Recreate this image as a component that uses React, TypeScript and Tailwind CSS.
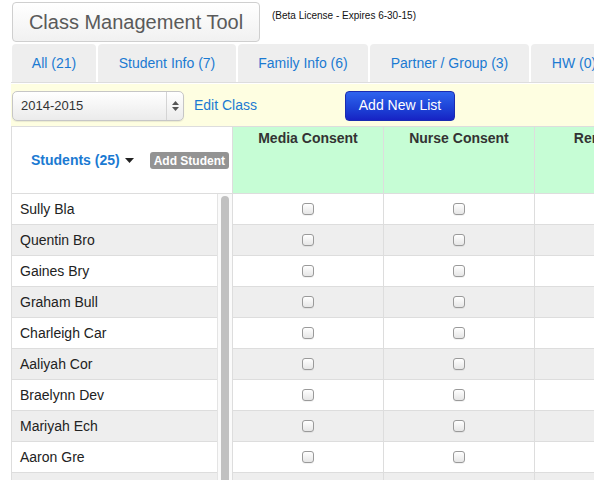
import React from 'react'

const TABS: { label: string; width: string }[] = [
  { label: 'All (21)', width: 'w-[84px]' },
  { label: 'Student Info (7)', width: 'w-[138px]' },
  { label: 'Family Info (6)', width: 'w-[130px]' },
  { label: 'Partner / Group (3)', width: 'w-[159px]' },
  { label: 'HW (0)', width: 'w-[86px]' },
]

const STUDENTS = [
  'Sully Bla',
  'Quentin Bro',
  'Gaines Bry',
  'Graham Bull',
  'Charleigh Car',
  'Aaliyah Cor',
  'Braelynn Dev',
  'Mariyah Ech',
  'Aaron Gre',
  '',
]

const COLUMNS = ['Media Consent', 'Nurse Consent', 'Reminders']

function Checkbox() {
  return (
    <span className="block w-[12px] h-[12px] rounded-[3px] border border-[#9a9a9a] bg-gradient-to-b from-white to-[#e6e6e6] shadow-[0_1px_0_rgba(0,0,0,0.05)]" />
  )
}

function Caret() {
  return (
    <svg width="9" height="5" viewBox="0 0 9 5" aria-hidden="true" className="ml-[5px]">
      <path d="M0 0h9L4.5 5z" fill="#222" />
    </svg>
  )
}

export default function App() {
  return (
    <div className="w-[594px] h-[480px] overflow-hidden bg-white font-['Liberation_Sans',Arial,sans-serif] text-[#333]">

      {/* Title */}
      <div className="flex items-start pl-[12px] pt-[2px] h-[42px]">
        <div className="w-[248px] h-[40px] flex items-center justify-center rounded-[4px] border border-[#cfcfcf] bg-gradient-to-b from-white to-[#f1f1f1] text-[20px] text-[#5a5a5a]">
          Class Management Tool
        </div>
        <span className="ml-[12px] mt-[6px] text-[10px] text-[#111]">(Beta License - Expires 6-30-15)</span>
      </div>

      {/* Tabs */}
      <div className="flex gap-[2px] pl-[12px] mt-[2px] h-[38px] whitespace-nowrap">
        {TABS.map((t) => (
          <div
            key={t.label}
            className={`${t.width} shrink-0 h-full flex items-center justify-center rounded-t-[4px] bg-[#eeeeee] text-[14px] text-[#1b7ad2]`}
          >
            {t.label}
          </div>
        ))}
      </div>
      <div className="ml-[11px] h-px bg-[#dddddd]" />
      <div className="h-px" />

      {/* Toolbar */}
      <div className="ml-[11px] h-[42px] bg-[#fefee1] flex items-center pl-[1px] pt-[1px]">
        <div className="w-[172px] h-[30px] flex items-center rounded-[5px] border border-[#c6c6c6] bg-gradient-to-b from-white to-[#ebebeb] shadow-[0_1px_1px_rgba(0,0,0,0.08)]">
          <span className="flex-1 pl-[8px] text-[13px] text-[#333]">2014-2015</span>
          <span className="w-[17px] h-full border-l border-[#d4d4d4] flex flex-col items-center justify-center gap-[2px] text-[#555]">
            <svg width="7" height="4" viewBox="0 0 7 4" aria-hidden="true"><path d="M0 4L3.5 0L7 4z" fill="#555" /></svg>
            <svg width="7" height="4" viewBox="0 0 7 4" aria-hidden="true"><path d="M0 0h7L3.5 4z" fill="#555" /></svg>
          </span>
        </div>
        <span className="ml-[10px] text-[14px] text-[#1b7ad2]">Edit Class</span>
        <button className="ml-[88px] w-[110px] h-[30px] rounded-[4px] border border-[#1b2cb0] bg-gradient-to-b from-[#2f64ee] to-[#1722c4] text-[14px] text-white">
          Add New List
        </button>
      </div>

      {/* Table */}
      <div className="ml-[11px] border-t border-l border-[#dddddd]">

        {/* Header */}
        <div className="flex h-[67px] border-b border-[#dddddd] whitespace-nowrap">
          <div className="w-[220px] shrink-0 flex items-center pl-[19px] pt-[1px]">
            <span className="text-[14px] font-bold text-[#1b7ad2]">Students (25)</span>
            <Caret />
            <span className="ml-[16px] px-[4px] h-[17px] flex items-center rounded-[3px] bg-[#939393] text-[12px] font-bold text-white">
              Add Student
            </span>
          </div>
          {COLUMNS.map((c) => (
            <div key={c} className="w-[151px] shrink-0 border-l border-[#dddddd] bg-[#c6fdd5] text-center pt-[1px] text-[14px] font-bold text-[#333] leading-[20px]">
              {c}
            </div>
          ))}
        </div>

        {/* Body */}
        <div className="flex">
          <div className="w-[205px] shrink-0">
            {STUDENTS.map((s, i) => (
              <div
                key={i}
                className={`h-[31px] border-b border-[#dddddd] flex items-center pl-[8px] text-[14px] text-[#222] ${i % 2 ? 'bg-[#eeeeee]' : 'bg-white'}`}
              >
                {s}
              </div>
            ))}
          </div>
          <div className="w-[15px] shrink-0 bg-[#fafafa] border-l border-[#e4e4e4] pl-[3px] pt-[2px]">
            <div className="w-[8px] h-[300px] rounded-full bg-[#c1c1c1]" />
          </div>
          <div className="flex-1">
            {STUDENTS.map((s, i) => (
              <div
                key={i}
                className={`h-[31px] border-b border-[#dddddd] flex ${i % 2 ? 'bg-[#eeeeee]' : 'bg-white'}`}
              >
                {COLUMNS.map((c, j) => (
                  <div key={c} className="w-[151px] shrink-0 border-l border-[#dddddd] flex items-center justify-center">
                    {j < 2 && <Checkbox />}
                  </div>
                ))}
              </div>
            ))}
          </div>
        </div>
      </div>
    </div>
  )
}
